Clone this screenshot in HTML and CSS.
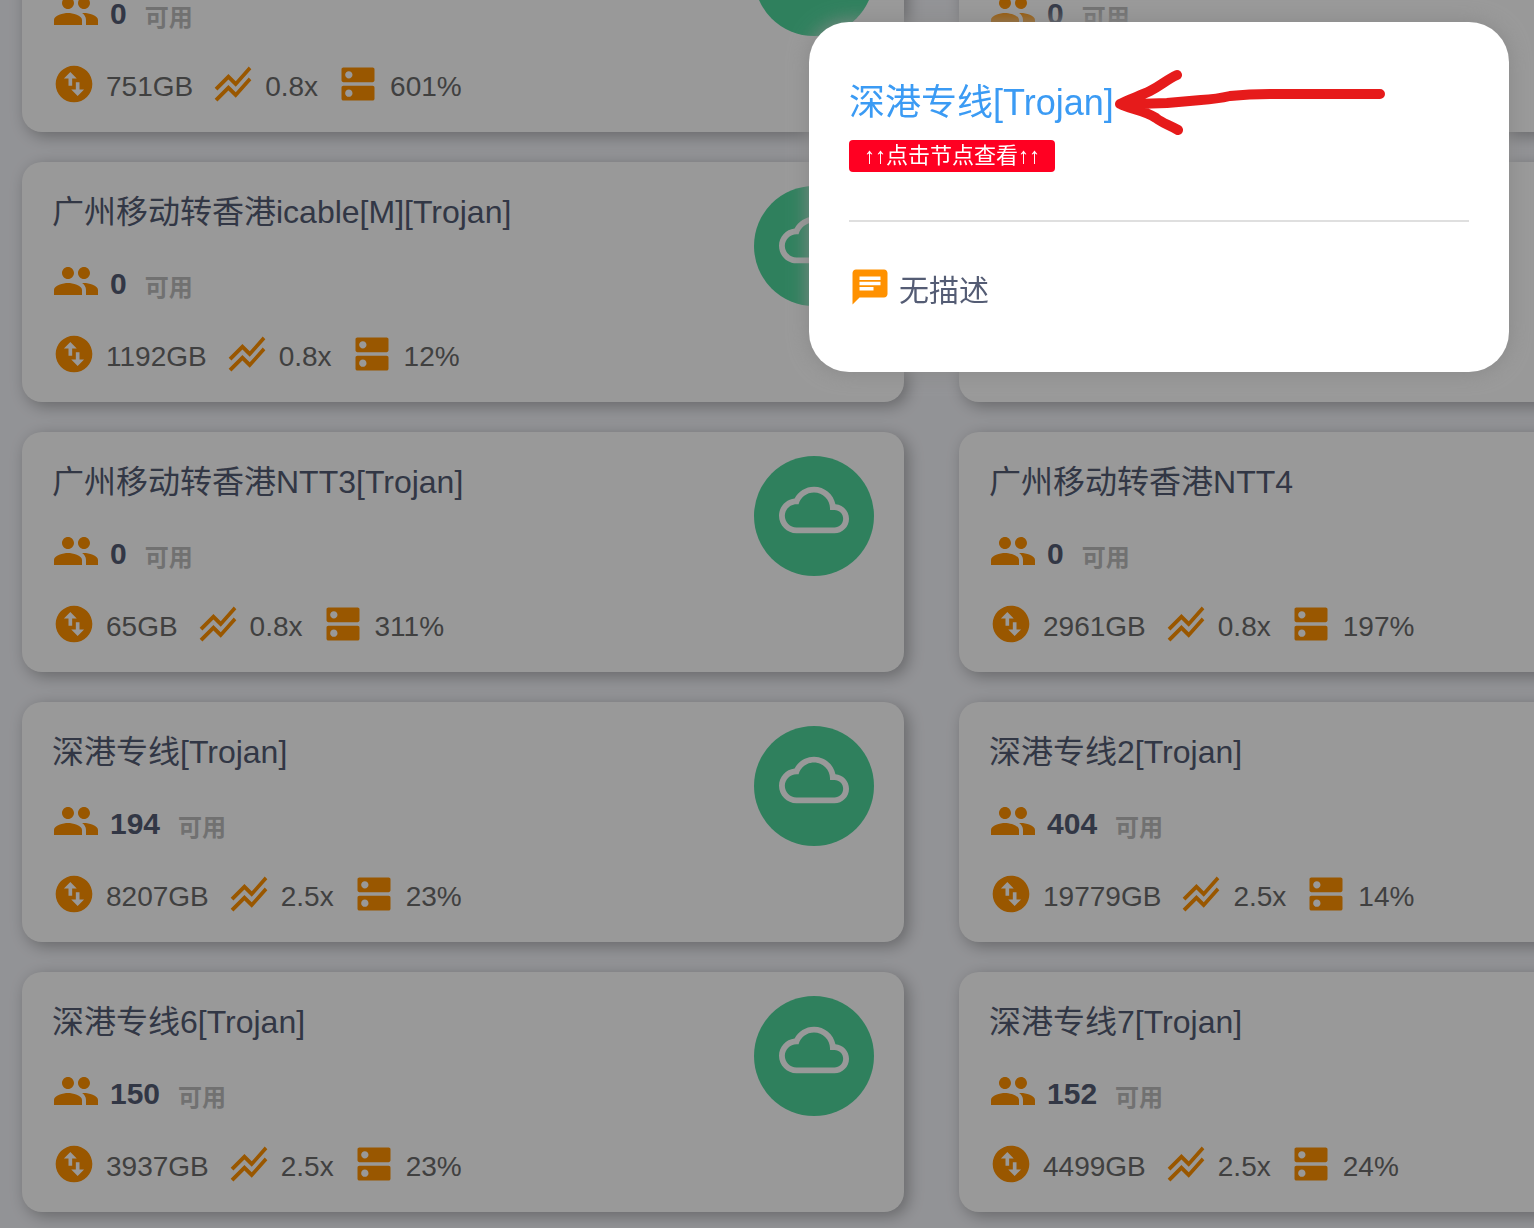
FILE: index.html
```html
<!DOCTYPE html>
<html lang="zh-CN">
<head>
<meta charset="utf-8">
<title>节点列表</title>
<link rel="stylesheet" href="styles.css">
</head>
<body>
<svg class="sprite" aria-hidden="true">
  <symbol id="people" viewBox="0 0 24 24"><path d="M16 11c1.66 0 2.99-1.34 2.99-3S17.66 5 16 5c-1.66 0-3 1.34-3 3s1.34 3 3 3zm-8 0c1.66 0 2.99-1.34 2.99-3S9.66 5 8 5C6.34 5 5 6.34 5 8s1.34 3 3 3zm0 2c-2.33 0-7 1.17-7 3.5V19h14v-2.5c0-2.33-4.67-3.5-7-3.5zm8 0c-.29 0-.62.02-.97.05 1.16.84 1.97 1.97 1.97 3.45V19h6v-2.5c0-2.33-4.67-3.5-7-3.5z"/></symbol>
  <symbol id="swap" viewBox="0 0 24 24"><path d="M12 2C6.48 2 2 6.48 2 12s4.48 10 10 10 10-4.48 10-10S17.52 2 12 2zM6.5 9L10 5.500 13.500 9H11v4H9V9H6.500zm11 6L14 18.500 10.500 15H13v-4h2v4h2.500z"/></symbol>
  <symbol id="rate" viewBox="0 0 24 24"><path d="M2 19.990l7.500-7.510 4 4 7.090-7.970L22 9.920l-8.500 9.560-4-4-6 6.010L2 19.990zM3.500 15.490l6-6.010 4 4L22 3.920l-1.410-1.410-7.090 7.970-4-4L2 13.990l1.500 1.500z"/></symbol>
  <symbol id="load" viewBox="0 0 24 24"><path d="M20 13H4c-.55 0-1 .45-1 1v6c0 .55.45 1 1 1h16c.55 0 1-.45 1-1v-6c0-.55-.45-1-1-1zM7 19c-1.100 0-2-.9-2-2s.9-2 2-2 2 .9 2 2-.9 2-2 2zM20 3H4c-.55 0-1 .45-1 1v6c0 .55.45 1 1 1h16c.55 0 1-.45 1-1V4c0-.55-.45-1-1-1zM7 9c-1.100 0-2-.9-2-2s.9-2 2-2 2 .9 2 2-.9 2-2 2z"/></symbol>
  <symbol id="cloud" viewBox="0 0 24 24"><path d="M19.350 10.040C18.670 6.590 15.640 4 12 4 9.110 4 6.600 5.640 5.350 8.040 2.340 8.360 0 10.910 0 14c0 3.310 2.690 6 6 6h13c2.760 0 5-2.240 5-5 0-2.640-2.050-4.780-4.650-4.960zM19 18H6c-2.210 0-4-1.790-4-4s1.790-4 4-4h.71C7.370 7.690 9.480 6 12 6c3.040 0 5.500 2.460 5.500 5.500v.5H19c1.660 0 3 1.340 3 3s-1.340 3-3 3z"/></symbol>
  <symbol id="chat" viewBox="0 0 24 24"><path d="M20 2H4c-1.100 0-1.990.9-1.990 2L2 22l4-4h14c1.100 0 2-.9 2-2V4c0-1.100-.9-2-2-2zM6 9h12v2H6V9zm8 5H6v-2h8v2zm4-6H6V6h12v2z"/></symbol>
</svg>

<main class="nodes">
  <article class="card">
    <div class="info">
      <h2 class="name"></h2>
      <p class="users"><svg class="icon-lg"><use href="#people"/></svg><b class="count">0</b><span class="state">可用</span></p>
      <ul class="stats">
        <li class="stat"><svg class="icon"><use href="#swap"/></svg><span class="value">751GB</span></li>
        <li class="stat"><svg class="icon"><use href="#rate"/></svg><span class="value">0.8x</span></li>
        <li class="stat"><svg class="icon"><use href="#load"/></svg><span class="value">601%</span></li>
      </ul>
    </div>
    <div class="status"><svg class="cloud"><use href="#cloud"/></svg></div>
  </article>
  <article class="card">
    <div class="info">
      <h2 class="name"></h2>
      <p class="users"><svg class="icon-lg"><use href="#people"/></svg><b class="count">0</b><span class="state">可用</span></p>
    </div>
    <div class="status"><svg class="cloud"><use href="#cloud"/></svg></div>
  </article>

  <article class="card">
    <div class="info">
      <h2 class="name">广州移动转香港icable[M][Trojan]</h2>
      <p class="users"><svg class="icon-lg"><use href="#people"/></svg><b class="count">0</b><span class="state">可用</span></p>
      <ul class="stats">
        <li class="stat"><svg class="icon"><use href="#swap"/></svg><span class="value">1192GB</span></li>
        <li class="stat"><svg class="icon"><use href="#rate"/></svg><span class="value">0.8x</span></li>
        <li class="stat"><svg class="icon"><use href="#load"/></svg><span class="value">12%</span></li>
      </ul>
    </div>
    <div class="status"><svg class="cloud"><use href="#cloud"/></svg></div>
  </article>
  <article class="card">
    <div class="info">
      <h2 class="name"></h2>
    </div>
    <div class="status"><svg class="cloud"><use href="#cloud"/></svg></div>
  </article>

  <article class="card">
    <div class="info">
      <h2 class="name">广州移动转香港NTT3[Trojan]</h2>
      <p class="users"><svg class="icon-lg"><use href="#people"/></svg><b class="count">0</b><span class="state">可用</span></p>
      <ul class="stats">
        <li class="stat"><svg class="icon"><use href="#swap"/></svg><span class="value">65GB</span></li>
        <li class="stat"><svg class="icon"><use href="#rate"/></svg><span class="value">0.8x</span></li>
        <li class="stat"><svg class="icon"><use href="#load"/></svg><span class="value">311%</span></li>
      </ul>
    </div>
    <div class="status"><svg class="cloud"><use href="#cloud"/></svg></div>
  </article>
  <article class="card">
    <div class="info">
      <h2 class="name">广州移动转香港NTT4</h2>
      <p class="users"><svg class="icon-lg"><use href="#people"/></svg><b class="count">0</b><span class="state">可用</span></p>
      <ul class="stats">
        <li class="stat"><svg class="icon"><use href="#swap"/></svg><span class="value">2961GB</span></li>
        <li class="stat"><svg class="icon"><use href="#rate"/></svg><span class="value">0.8x</span></li>
        <li class="stat"><svg class="icon"><use href="#load"/></svg><span class="value">197%</span></li>
      </ul>
    </div>
    <div class="status"><svg class="cloud"><use href="#cloud"/></svg></div>
  </article>

  <article class="card">
    <div class="info">
      <h2 class="name">深港专线[Trojan]</h2>
      <p class="users"><svg class="icon-lg"><use href="#people"/></svg><b class="count">194</b><span class="state">可用</span></p>
      <ul class="stats">
        <li class="stat"><svg class="icon"><use href="#swap"/></svg><span class="value">8207GB</span></li>
        <li class="stat"><svg class="icon"><use href="#rate"/></svg><span class="value">2.5x</span></li>
        <li class="stat"><svg class="icon"><use href="#load"/></svg><span class="value">23%</span></li>
      </ul>
    </div>
    <div class="status"><svg class="cloud"><use href="#cloud"/></svg></div>
  </article>
  <article class="card">
    <div class="info">
      <h2 class="name">深港专线2[Trojan]</h2>
      <p class="users"><svg class="icon-lg"><use href="#people"/></svg><b class="count">404</b><span class="state">可用</span></p>
      <ul class="stats">
        <li class="stat"><svg class="icon"><use href="#swap"/></svg><span class="value">19779GB</span></li>
        <li class="stat"><svg class="icon"><use href="#rate"/></svg><span class="value">2.5x</span></li>
        <li class="stat"><svg class="icon"><use href="#load"/></svg><span class="value">14%</span></li>
      </ul>
    </div>
    <div class="status"><svg class="cloud"><use href="#cloud"/></svg></div>
  </article>

  <article class="card">
    <div class="info">
      <h2 class="name">深港专线6[Trojan]</h2>
      <p class="users"><svg class="icon-lg"><use href="#people"/></svg><b class="count">150</b><span class="state">可用</span></p>
      <ul class="stats">
        <li class="stat"><svg class="icon"><use href="#swap"/></svg><span class="value">3937GB</span></li>
        <li class="stat"><svg class="icon"><use href="#rate"/></svg><span class="value">2.5x</span></li>
        <li class="stat"><svg class="icon"><use href="#load"/></svg><span class="value">23%</span></li>
      </ul>
    </div>
    <div class="status"><svg class="cloud"><use href="#cloud"/></svg></div>
  </article>
  <article class="card">
    <div class="info">
      <h2 class="name">深港专线7[Trojan]</h2>
      <p class="users"><svg class="icon-lg"><use href="#people"/></svg><b class="count">152</b><span class="state">可用</span></p>
      <ul class="stats">
        <li class="stat"><svg class="icon"><use href="#swap"/></svg><span class="value">4499GB</span></li>
        <li class="stat"><svg class="icon"><use href="#rate"/></svg><span class="value">2.5x</span></li>
        <li class="stat"><svg class="icon"><use href="#load"/></svg><span class="value">24%</span></li>
      </ul>
    </div>
    <div class="status"><svg class="cloud"><use href="#cloud"/></svg></div>
  </article>
</main>

<div class="overlay">
  <section class="modal" role="dialog" aria-labelledby="modal-title">
    <a class="modal-link" id="modal-title" href="#node">深港专线[Trojan]</a>
    <span class="badge">↑↑点击节点查看↑↑</span>
    <hr class="rule">
    <p class="desc"><svg class="icon-md"><use href="#chat"/></svg><span class="desc-text">无描述</span></p>
    <svg class="arrow" viewBox="0 0 280 80" aria-hidden="true">
      <path d="M271 34H161Q140 34 121 36Q108 39 92 40L58 43Q35 44 11 44M68 15C57 20 53 25 41 31C31 36 20 39 11 44C20 49 35 50 47 58C53 63 58 64 69 70"/>
    </svg>
  </section>
</div>
</body>
</html>
```

FILE: styles.css
```css
* { box-sizing: border-box; }

body {
  margin: 0;
  height: 100vh;
  overflow: hidden;
  display: flex;
  flex-direction: column;
  justify-content: flex-end;
  background: #f4f5fa;
  color: #545c74;
  font-family: "Liberation Sans", "Noto Sans CJK SC", sans-serif;
}

h2, p, ul { margin: 0; padding: 0; }

svg { flex: none; fill: currentColor; }

.sprite { position: absolute; width: 0; height: 0; }

.nodes {
  display: grid;
  grid-template-columns: repeat(2, 57.5vw);
  gap: 30px 55px;
  padding: 0 22px 16px;
}

.card {
  display: flex;
  justify-content: space-between;
  min-height: 240px;
  padding: 24px 30px 26px;
  border-radius: 20px;
  background: #fff;
  box-shadow: 4px 4px 16px rgba(0, 0, 0, 0.3);
}

.info { display: flex; flex-direction: column; padding-top: 6px; }

.name {
  min-height: 40px;
  font-size: 32px;
  font-weight: 400;
  line-height: 40px;
}

.users {
  display: flex;
  align-items: center;
  height: 48px;
  margin-top: 25px;
}

.icon, .icon-lg, .icon-md { color: #ff9100; }
.icon { width: 44px; height: 44px; }
.icon-md { width: 42px; height: 42px; }
.icon-lg { width: 48px; height: 48px; }

.count {
  margin-left: 10px;
  padding-top: 6px;
  font-size: 30px;
  line-height: 36px;
}

.state {
  margin-left: 18px;
  padding-top: 14px;
  color: #bcbcbc;
  font-size: 24px;
  font-weight: 700;
  line-height: 36px;
}

.stats {
  display: flex;
  gap: 18px;
  margin-top: 27px;
  list-style: none;
}

.stat { display: flex; align-items: center; gap: 10px; color: #6b6b6b; }

.value { padding-top: 6px; font-size: 28px; line-height: 36px; }

.status {
  display: flex;
  flex: none;
  align-items: center;
  justify-content: center;
  width: 120px;
  height: 120px;
  padding-bottom: 12px;
  border-radius: 50%;
  background: #4fd69c;
  color: #fff;
}

.cloud { width: 70px; height: 70px; }

.overlay {
  position: fixed;
  inset: 0;
  display: flex;
  align-items: flex-start;
  justify-content: flex-end;
  padding: 22px 25px;
  background: rgba(0, 0, 0, 0.4);
}

.modal {
  position: relative;
  display: flex;
  flex-direction: column;
  align-items: flex-start;
  width: 700px;
  max-width: 100%;
  padding: 58px 40px 64px;
  border-radius: 40px;
  background: #fff;
  box-shadow: 0 0 20px #888;
}

.modal-link {
  color: #3b9bf4;
  font-size: 36px;
  font-weight: 400;
  line-height: 46px;
  text-decoration: none;
}

.badge {
  margin-top: 14px;
  padding: 0 15px;
  border-radius: 4px;
  background: #ff0022;
  color: #fff;
  font-size: 22px;
  line-height: 32px;
}

.rule {
  width: 100%;
  margin: 48px 0 44px;
  border: 0;
  border-top: 2px solid #dfdfdf;
}

.desc { display: flex; align-items: center; gap: 8px; }

.desc-text { padding-top: 8px; font-size: 30px; line-height: 34px; }

.arrow {
  position: absolute;
  top: 38px;
  left: 300px;
  width: 280px;
  height: 80px;
  fill: none;
  stroke: #e61b1b;
  stroke-width: 10;
  stroke-linecap: round;
  stroke-linejoin: round;
}
```
